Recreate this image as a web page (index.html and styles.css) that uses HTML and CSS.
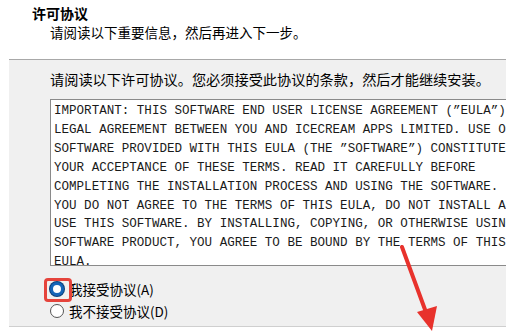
FILE: index.html
```html
<!DOCTYPE html>
<html lang="zh-CN">
<head>
<meta charset="utf-8">
<link rel="stylesheet" href="styles.css">
</head>
<body>
<div class="page">
  <header class="header">
    <div class="title">许可协议</div>
    <div class="subtitle">请阅读以下重要信息，然后再进入下一步。</div>
  </header>
  <section class="panel">
    <div class="intro">请阅读以下许可协议。您必须接受此协议的条款，然后才能继续安装。</div>
    <div class="eula">IMPORTANT: THIS SOFTWARE END USER LICENSE AGREEMENT (”EULA”) IS A
LEGAL AGREEMENT BETWEEN YOU AND ICECREAM APPS LIMITED. USE OF
SOFTWARE PROVIDED WITH THIS EULA (THE ”SOFTWARE”) CONSTITUTES
YOUR ACCEPTANCE OF THESE TERMS. READ IT CAREFULLY BEFORE
COMPLETING THE INSTALLATION PROCESS AND USING THE SOFTWARE. IF
YOU DO NOT AGREE TO THE TERMS OF THIS EULA, DO NOT INSTALL AND
USE THIS SOFTWARE. BY INSTALLING, COPYING, OR OTHERWISE USING
SOFTWARE PRODUCT, YOU AGREE TO BE BOUND BY THE TERMS OF THIS
EULA.</div>
    <div class="choices">
      <label class="choice">
        <span class="radio radio-on"></span>
        <span class="choice-text">我接受协议(A)</span>
        <span class="mark"></span>
      </label>
      <label class="choice">
        <span class="radio"></span>
        <span class="choice-text">我不接受协议(D)</span>
      </label>
    </div>
  </section>
  <svg class="arrow" width="514" height="335" viewBox="0 0 514 335">
    <line x1="402" y1="247" x2="427" y2="315" stroke="#e8322c" stroke-width="4" stroke-linecap="round"/>
    <polygon points="432,331 417,312 437,306" fill="#e8322c"/>
  </svg>
</div>
</body>
</html>
```
FILE: styles.css
```css
html, body {
  margin: 0;
  padding: 0;
  background: #ffffff;
}

.page {
  position: relative;
  width: 514px;
  height: 335px;
  overflow: hidden;
  font-family: "Noto Sans CJK SC", "Liberation Sans", sans-serif;
  color: #000;
}

.header {
  height: 59px;
  box-sizing: border-box;
  padding: 3px 0 0 32px;
}

.title {
  font-size: 14px;
  font-weight: bold;
  line-height: 20px;
}

.subtitle {
  font-size: 13.5px;
  line-height: 20px;
  padding-left: 18px;
  margin-top: -1px;
}

.panel {
  margin-left: 9px;
  width: 497px;
  height: 268px;
  box-sizing: border-box;
  background: #f0f0f0;
  border-top: 1px solid #a8a8a8;
  border-bottom: 1px solid #cfcfcf;
  padding: 9px 0 0 41px;
  overflow: hidden;
}

.intro {
  font-size: 14.2px;
  line-height: 20px;
  white-space: nowrap;
}

.eula {
  margin-top: 10px;
  width: 490px;
  height: 167px;
  box-sizing: border-box;
  background: #fff;
  border: 1px solid #8a8a8a;
  border-right: none;
  padding: 2px 0 0 3px;
  font-family: "Liberation Mono", "DejaVu Sans Mono", monospace;
  font-size: 12.55px;
  line-height: 18.9px;
  color: #1a1a1a;
  white-space: pre;
  overflow: hidden;
}

.choices {
  display: flex;
  flex-direction: column;
  gap: 2px;
  margin-top: 13px;
}

.choice {
  position: relative;
  display: flex;
  align-items: center;
  gap: 5px;
  height: 20px;
}

.radio {
  width: 14px;
  height: 14px;
  box-sizing: border-box;
  border-radius: 50%;
  border: 1px solid #555;
  background: #fff;
}

.radio-on {
  border: 3px solid #1565b8;
  box-shadow: 0 0 0 1px #0c3f78;
}

.choice-text {
  font-size: 13.5px;
  line-height: 20px;
  white-space: nowrap;
}

.mark {
  position: absolute;
  left: -6px;
  top: -1px;
  width: 28px;
  height: 24px;
  box-sizing: border-box;
  border: 3px solid #e5443c;
  border-radius: 4px;
}

.arrow {
  position: absolute;
  left: 0;
  top: 0;
  pointer-events: none;
}
```
